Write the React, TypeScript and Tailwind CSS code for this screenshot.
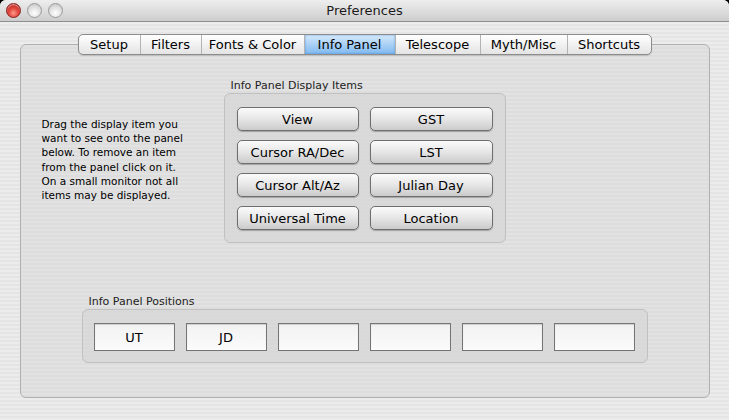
import React from "react";

const font = { fontFamily: '"DejaVu Sans", "Liberation Sans", sans-serif' };

const tabs = ["Setup", "Filters", "Fonts & Color", "Info Panel", "Telescope", "Myth/Misc", "Shortcuts"];
const tabWidths = [61, 61, 103, 91, 85, 87, 84];

const items = [
  ["View", "GST"],
  ["Cursor RA/Dec", "LST"],
  ["Cursor Alt/Az", "Julian Day"],
  ["Universal Time", "Location"],
];

const positions = ["UT", "JD", "", "", "", ""];

const helpLines = [
  "Drag the display item you",
  "want to see onto the panel",
  "below. To remove an item",
  "from the panel click on it.",
  "On a small monitor not all",
  "items may be displayed.",
];

function Light({ red }: { red?: boolean }) {
  return (
    <div
      className={
        red
          ? "w-[15px] h-[15px] rounded-full border border-[#8a1d1d] bg-[radial-gradient(circle_at_50%_70%,#ff9a8a_0%,#e0443a_45%,#a81c1c_100%)] shadow-[inset_0_1px_1px_rgba(255,255,255,0.6)]"
          : "w-[15px] h-[15px] rounded-full border border-[#9a9a9a] bg-[radial-gradient(circle_at_50%_70%,#ffffff_0%,#e2e2e2_50%,#bdbdbd_100%)]"
      }
    />
  );
}

export default function App() {
  return (
    <div className="w-[729px] h-[420px] bg-black overflow-hidden" style={font}>
      <div className="w-full h-full flex flex-col rounded-t-[6px] overflow-hidden bg-[#e9e9e9]">
        {/* title bar */}
        <div className="h-[22px] shrink-0 relative flex items-center justify-center bg-gradient-to-b from-[#eeeeee] to-[#cdcdcd] border-b border-[#8e8e8e]">
          <div className="absolute left-[6px] top-[3px] flex gap-[6px]">
            <Light red />
            <Light />
            <Light />
          </div>
          <span className="text-[13px] text-[#1a1a1a] leading-none">Preferences</span>
        </div>

        {/* body */}
        <div className="flex-1 flex flex-col items-center pt-[12px] px-[20px] bg-[image:repeating-linear-gradient(180deg,#ececec_0px,#ececec_2px,#e5e5e5_2px,#e5e5e5_4px)]">
          {/* tabs */}
          <div className="relative z-10 flex h-[21px] rounded-[5px] border border-[#8c8c8c] bg-gradient-to-b from-[#ffffff] to-[#e4e4e4] shadow-[0_1px_1px_rgba(0,0,0,0.15)] overflow-hidden">
            {tabs.map((t, i) => {
              const sel = t === "Info Panel";
              return (
                <div
                  key={t}
                  style={{ width: tabWidths[i] }}
                  className={
                    "h-full flex items-center justify-center text-[13px] leading-none text-black " +
                    (i > 0 ? "border-l border-[#b3b3b3] " : "") +
                    (sel
                      ? "bg-gradient-to-b from-[#d7eafc] via-[#a9d0f5] to-[#7fb9ef] shadow-[inset_0_0_2px_rgba(40,110,200,0.7)]"
                      : "")
                  }
                >
                  {t}
                </div>
              );
            })}
          </div>

          {/* panel */}
          <div className="-mt-[11px] w-[690px] h-[354px] rounded-[6px] border border-[#b0b0b0] bg-[image:repeating-linear-gradient(180deg,#e2e2e2_0px,#e2e2e2_2px,#dddddd_2px,#dddddd_4px)] flex flex-col pt-[34px]">
            <div className="flex">
              <div className="ml-[21px] w-[160px] mt-[38px] flex flex-col text-[10.5px] leading-[14.2px] text-black whitespace-nowrap">
                {helpLines.map((l) => (
                  <span key={l}>{l}</span>
                ))}
              </div>
              <div className="ml-[22px] flex flex-col">
                <div className="h-[14px] pl-[7px] text-[11px] leading-[14px] text-[#222]">Info Panel Display Items</div>
                <div className="w-[282px] h-[150px] rounded-[6px] border border-[#c0c0c0] bg-[#d6d6d6]/60 pt-[13px] pl-[12px]">
                  <div className="grid grid-cols-[122px_123px] gap-x-[11px] gap-y-[9px]">
                    {items.flat().map((b) => (
                      <div
                        key={b}
                        className="h-[24px] rounded-[5px] border border-[#6e6e6e] bg-gradient-to-b from-[#fbfbfb] via-[#e6e6e6] to-[#cbcbcb] shadow-[0_1px_1px_rgba(0,0,0,0.25)] flex items-center justify-center text-[13px] leading-none text-black"
                      >
                        {b}
                      </div>
                    ))}
                  </div>
                </div>
              </div>
            </div>

            <div className="ml-[61px] mt-[52px] flex flex-col">
              <div className="h-[14px] pl-[7px] text-[11px] leading-[14px] text-[#222]">Info Panel Positions</div>
              <div className="w-[566px] h-[54px] rounded-[6px] border border-[#c0c0c0] bg-[#d6d6d6]/60 pt-[13px] pl-[11px] flex gap-[11px]">
                {positions.map((p, i) => (
                  <div
                    key={i}
                    className="w-[81px] h-[28px] border border-[#747474] bg-gradient-to-b from-[#f2f2f2] to-[#fbfbfb] shadow-[inset_0_1px_1px_rgba(0,0,0,0.15)] flex items-center justify-center text-[13px] leading-none text-black"
                  >
                    {p}
                  </div>
                ))}
              </div>
            </div>
          </div>
        </div>
      </div>
    </div>
  );
}
